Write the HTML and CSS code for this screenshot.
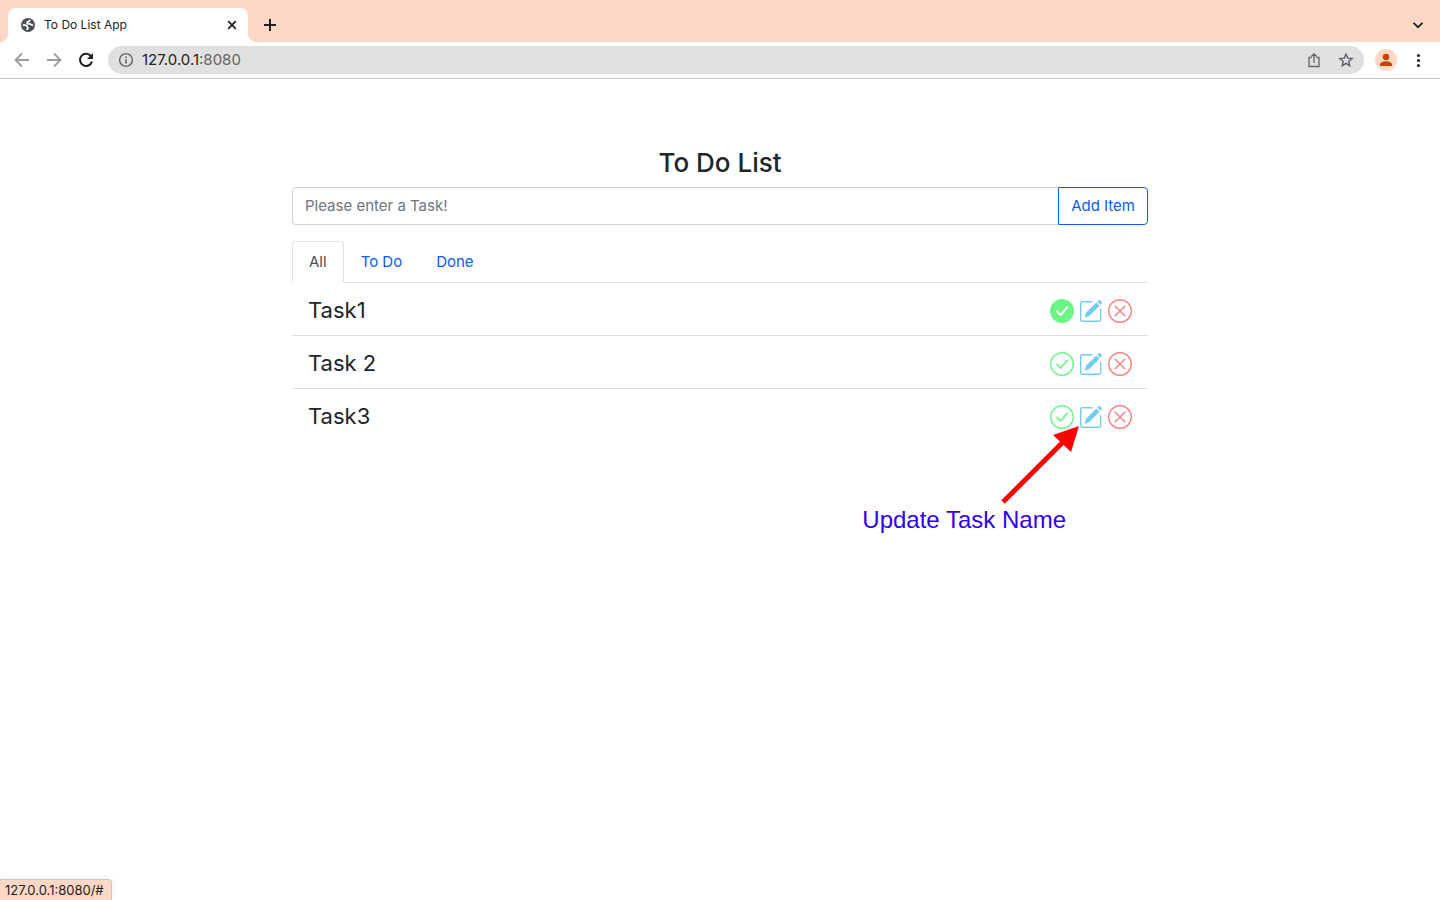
FILE: index.html
```html
<!DOCTYPE html>
<html lang="en">
<head>
<meta charset="utf-8">
<title>To Do List App</title>
<link rel="stylesheet" href="styles.css">
</head>
<body>
<svg class="sprite" aria-hidden="true">
  <symbol id="check" viewBox="0 0 24 24"><circle cx="12" cy="12" r="11.3" fill="none" stroke="currentColor" stroke-width="1.4"/><path d="M7 12.4l3.6 3.6 6.6-7.6" fill="none" stroke="currentColor" stroke-width="1.7" stroke-linecap="round" stroke-linejoin="round"/></symbol>
  <symbol id="check-fill" viewBox="0 0 24 24"><circle cx="12" cy="12" r="12" fill="currentColor"/><path d="M7 12.4l3.6 3.6 6.6-7.6" fill="none" stroke="#fff" stroke-width="2" stroke-linecap="round" stroke-linejoin="round"/></symbol>
  <symbol id="edit" viewBox="0 0 24 24"><path d="M13 2.700H3.400a1.700 1.700 0 0 0-1.700 1.700V20.600a1.700 1.700 0 0 0 1.700 1.700H20a1.700 1.700 0 0 0 1.700-1.700V10.500" fill="none" stroke="currentColor" stroke-width="1.400" stroke-linecap="round"/><path d="M5.500 18.700l1.500-5L17.300 3.400l3.300 3.300L10.300 17.100zM18.200 2.500l1.300-1.300q.7-.6 1.400 0l1.800 1.800q.6.700 0 1.400l-1.300 1.300z" fill="currentColor"/></symbol>
  <symbol id="cross" viewBox="0 0 24 24"><circle cx="12" cy="12" r="11.300" fill="none" stroke="currentColor" stroke-width="1.400"/><path d="M7.200 7.200l9.600 9.600M16.800 7.200l-9.600 9.600" fill="none" stroke="currentColor" stroke-width="1.400" stroke-linecap="round"/></symbol>
</svg>
<div class="browser">
  <header class="chrome">
    <div class="tab-strip">
      <div class="browser-tab">
        <svg class="globe" viewBox="0 0 14 14"><circle cx="7" cy="7" r="7" fill="#4d5157"/><path d="M9 1.900c-.3 1.500-1 1.700-2.200 2-.9.200-.9 1.200-.3 1.700.8.600 2.800 0 3.600.9.500.6.800.9 2 .6M1.800 7.200h2.400c1.300 0 1.900.5 1.900 1.500 0 .8.900.7 1 1.200.100.800-.9 1-1.200 2" fill="none" stroke="#fff" stroke-width="1.700"/></svg>
        <span class="browser-tab-title">To Do List App</span>
        <button class="plain" aria-label="Close tab"><svg class="i16" viewBox="0 0 16 16"><path d="M4.200 4.200l7.600 7.600M11.800 4.200l-7.600 7.600" stroke="#202124" stroke-width="1.800"/></svg></button>
      </div>
      <button class="plain new-tab" aria-label="New tab"><svg class="i16" viewBox="0 0 16 16"><path d="M8 2v12M2 8h12" stroke="#202124" stroke-width="2"/></svg></button>
      <button class="plain tab-search" aria-label="Search tabs"><svg class="i16" viewBox="0 0 16 16"><path d="M3.500 5.800L8 10.200l4.500-4.400" fill="none" stroke="#202124" stroke-width="1.800"/></svg></button>
    </div>
    <div class="toolbar">
      <button class="plain" aria-label="Back"><svg class="i16" viewBox="0 0 16 16"><path d="M15 8H2M8 1.500L1.500 8 8 14.500" fill="none" stroke="#9c9da0" stroke-width="1.800"/></svg></button>
      <button class="plain" aria-label="Forward"><svg class="i16" viewBox="0 0 16 16"><path d="M1 8h13M8 1.500L14.500 8 8 14.500" fill="none" stroke="#9c9da0" stroke-width="1.800"/></svg></button>
      <button class="plain" aria-label="Reload"><svg class="i16" viewBox="0 0 16 16"><path d="M13.200 4.400A6.100 6.100 0 1 0 14 9.500" fill="none" stroke="#202124" stroke-width="2"/><path d="M15 1v6H9z" fill="#202124"/></svg></button>
      <div class="address">
        <svg class="i16" viewBox="0 0 16 16"><circle cx="8" cy="8" r="6.400" fill="none" stroke="#5f6368" stroke-width="1.400"/><path d="M8 7.200v4.200M8 4.400V6" stroke="#5f6368" stroke-width="1.600"/></svg>
        <span class="url">127.0.0.1<span class="port">:8080</span></span>
        <button class="plain" aria-label="Share"><svg class="i16" viewBox="0 0 16 16"><path d="M5.500 5.500H3v9h10v-9h-2.500M8 11V2M5.300 4.500L8 1.800l2.700 2.700" fill="none" stroke="#5f6368" stroke-width="1.300"/></svg></button>
        <button class="plain" aria-label="Bookmark"><svg class="i16" viewBox="0 0 16 16"><path d="M8 2l1.700 4.100 4.400.4-3.300 2.900 1 4.300L8 11.400l-3.800 2.300 1-4.300L1.900 6.500l4.400-.4z" fill="none" stroke="#5f6368" stroke-width="1.400"/></svg></button>
      </div>
      <button class="plain" aria-label="Profile"><svg class="avatar" viewBox="0 0 22 22"><circle cx="11" cy="11" r="11" fill="#ffd8c5"/><circle cx="11" cy="8" r="3.200" fill="#c94400"/><path d="M5 17v-1.500c0-2.300 3.500-3.300 6-3.300s6 1 6 3.300V17z" fill="#c94400"/></svg></button>
      <button class="plain" aria-label="Menu"><svg class="i16" viewBox="0 0 16 16"><g fill="#202124"><circle cx="8.500" cy="3.500" r="1.600"/><circle cx="8.500" cy="8.500" r="1.600"/><circle cx="8.500" cy="13.500" r="1.600"/></g></svg></button>
    </div>
  </header>
  <main class="page">
    <h1>To Do List</h1>
    <form class="add-form">
      <input type="text" placeholder="Please enter a Task!" aria-label="Task">
      <button type="button">Add Item</button>
    </form>
    <nav class="tabs">
      <a href="#" class="active">All</a>
      <a href="#">To Do</a>
      <a href="#">Done</a>
    </nav>
    <ul class="tasks">
      <li><span class="task-name">Task1</span><button class="plain done" aria-label="Mark not done"><svg><use href="#check-fill"/></svg></button><button class="plain edit" aria-label="Edit"><svg><use href="#edit"/></svg></button><button class="plain delete" aria-label="Delete"><svg><use href="#cross"/></svg></button></li>
      <li><span class="task-name">Task 2</span><button class="plain done" aria-label="Mark done"><svg><use href="#check"/></svg></button><button class="plain edit" aria-label="Edit"><svg><use href="#edit"/></svg></button><button class="plain delete" aria-label="Delete"><svg><use href="#cross"/></svg></button></li>
      <li><span class="task-name">Task3</span><button class="plain done" aria-label="Mark done"><svg><use href="#check"/></svg></button><button class="plain edit" aria-label="Edit"><svg><use href="#edit"/></svg></button><button class="plain delete" aria-label="Delete"><svg><use href="#cross"/></svg></button>
        <div class="callout">
          <svg viewBox="0 0 78 78"><path d="M2 76L64 14" stroke="#f00" stroke-width="5"/><path d="M78 0L52 9l18 17z" fill="#f00"/></svg>
          <span>Update Task Name</span>
        </div>
      </li>
    </ul>
  </main>
  <div class="status">127.0.0.1:8080/#</div>
</div>
</body>
</html>
```
FILE: styles.css
```css
* { box-sizing: border-box; }
body { margin: 0; background: #fff; color: #212529; font-family: Inter, "Liberation Sans", sans-serif; font-size: 15px; line-height: 24px; }
.sprite { position: absolute; width: 0; height: 0; }
.plain { display: flex; padding: 0; border: 0; background: none; color: inherit; }
.browser { position: relative; min-height: 100vh; }
.i16 { display: block; width: 16px; height: 16px; flex: none; }

.tab-strip { display: flex; align-items: center; height: 42px; padding: 8px 14px 0 8px; background: #ffd8c5; }
.browser-tab { position: relative; display: flex; align-items: center; gap: 9px; width: 240px; height: 34px; padding: 0 8px 0 13px; border-radius: 8px 8px 0 0; background: #fff; font-size: 12px; color: #202124; }
.browser-tab::before, .browser-tab::after { content: ""; position: absolute; bottom: 0; width: 8px; height: 8px; }
.browser-tab::before { right: 100%; background: radial-gradient(circle at 0 0, transparent 8px, #fff 8px); }
.browser-tab::after { left: 100%; background: radial-gradient(circle at 100% 0, transparent 8px, #fff 8px); }
.browser-tab-title { flex: 1; }
.globe { width: 14px; height: 14px; }
.new-tab { margin-left: 14px; }
.tab-search { margin-left: auto; }
.toolbar { display: flex; align-items: center; gap: 16px; height: 37px; padding: 0 14px; border-bottom: 1px solid #c9c9c9; }
.toolbar .address + .plain { margin-left: -5px; }
.toolbar > .plain:last-child { margin-left: -3px; }
.address { flex: 1; display: flex; align-items: center; gap: 16px; height: 28px; margin-left: -2px; padding: 0 10px; border-radius: 14px; background: #e0e0e0; }
.address .url { flex: 1; margin-left: -8px; font-size: 15px; color: #202124; }
.port { color: #5f6368; }
.avatar { width: 22px; height: 22px; }

.page { max-width: 856px; margin: 0 auto; padding-top: 67px; }
h1 { margin: 0 0 8px; font-size: 26px; font-weight: 500; line-height: 33px; text-align: center; }
.add-form { display: flex; height: 38px; margin-bottom: 16px; }
.add-form input { flex: 1; min-width: 0; padding: 0 12px; border: 1px solid #ced4da; border-right: 0; border-radius: 4px 0 0 4px; font: inherit; color: inherit; }
.add-form input::placeholder { color: #6c757d; opacity: 1; }
.add-form button { padding: 0 12px; border: 1px solid #0d5bf0; border-radius: 0 4px 4px 0; background: #fff; color: #0d5bf0; font: inherit; }
.tabs { display: flex; height: 42px; border-bottom: 1px solid #dee2e6; }
.tabs a { height: 42px; padding: 8px 16px; border: 1px solid transparent; border-radius: 4px 4px 0 0; color: #0d5bf0; text-decoration: none; }
.tabs .active { border-color: #dee2e6 #dee2e6 #fff; background: #fff; color: #495057; }
.tasks { margin: 0; padding: 0; list-style: none; }
.tasks li { position: relative; display: flex; align-items: center; gap: 5px; height: 53px; padding: 4px 16px 0; border-bottom: 1px solid #dcdcdc; }
.tasks li:last-child { border-bottom-color: transparent; }
.tasks svg { display: block; width: 24px; height: 24px; }
.task-name { flex: 1; padding-bottom: 2px; font-size: 22px; line-height: 28px; }
.done { color: #6cf587; }
.edit { color: #72cdf0; }
.delete { color: #f58080; }
.callout { position: absolute; top: 37px; right: 69px; display: flex; flex-direction: column; align-items: flex-end; color: #3000f5; font: 24px/28px "Liberation Sans", sans-serif; }
.callout span { margin: 2px 13px 0 0; white-space: nowrap; }
.tasks .callout svg { width: 78px; height: 78px; }
.status { position: absolute; left: 0; bottom: 0; padding: 0 7px 0 5px; border: 1px solid #cfc5c0; border-width: 1px 1px 0 0; border-radius: 0 4px 0 0; background: #ffd8c5; color: #202124; font-size: 13px; line-height: 20px; box-shadow: 0 0 8px #00000018; }
```
